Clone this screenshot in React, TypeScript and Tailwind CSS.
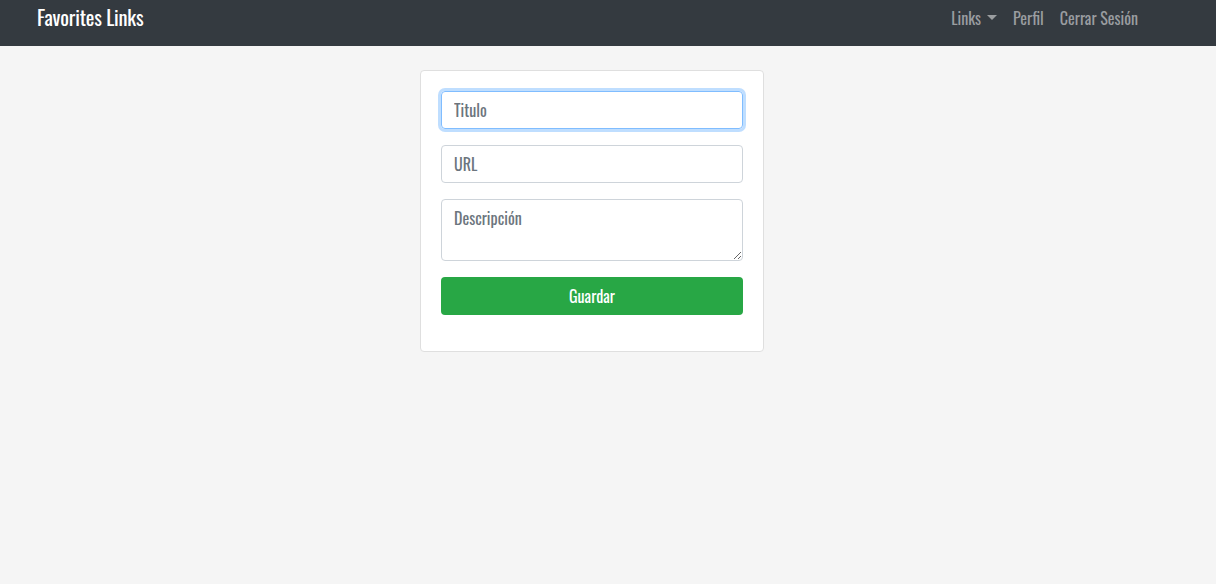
import React from "react";

const font = { fontFamily: "Oswald, 'Liberation Sans Narrow', 'DejaVu Sans Condensed', 'Roboto Condensed', 'Liberation Sans', sans-serif" };

export default function App() {
  return (
    <div className="min-h-[584px] bg-[#f5f5f5]" style={font}>
      <nav className="h-[46px] bg-[#343a40] flex items-center justify-between pl-[37px] pr-[78px] pb-[11px]">
        <a className="text-white text-[20.5px] leading-none tracking-[-0.2px]">Favorites Links</a>
        <div className="flex items-center gap-[16px] text-[16px] text-[#9a9da0] leading-none">
          <span className="flex items-center gap-[6px]">
            Links
            <svg width="10" height="6" viewBox="0 0 10 6" className="mt-[1px]"><path d="M0 0h10L5 5z" fill="#9a9da0" /></svg>
          </span>
          <span>Perfil</span>
          <span>Cerrar Sesión</span>
        </div>
      </nav>
      <div className="flex justify-center pt-[24px] pr-[32px]">
        <div className="w-[344px] bg-white border border-[#dfdfdf] rounded-[4px] px-[20px] pt-[20px] pb-[36px] flex flex-col gap-[16px]">
          <input
            autoFocus
            placeholder="Titulo"
            className="h-[38px] w-full rounded-[4px] border border-[#80bdff] px-[12px] text-[16px] text-[#495057] placeholder:text-[#6c757d] outline-none shadow-[0_0_0_3px_rgba(0,123,255,0.25)]"
            style={font}
          />
          <input
            placeholder="URL"
            className="h-[38px] w-full rounded-[4px] border border-[#ced4da] px-[12px] text-[16px] text-[#495057] placeholder:text-[#6c757d] outline-none"
            style={font}
          />
          <textarea
            placeholder="Descripción"
            className="h-[62px] w-full rounded-[4px] border border-[#ced4da] px-[12px] py-[6px] text-[16px] text-[#495057] placeholder:text-[#6c757d] outline-none block"
            style={font}
          />
          <button
            className="h-[38px] w-full rounded-[4px] bg-[#28a745] text-white text-[16px]"
            style={font}
          >
            Guardar
          </button>
        </div>
      </div>
    </div>
  );
}
